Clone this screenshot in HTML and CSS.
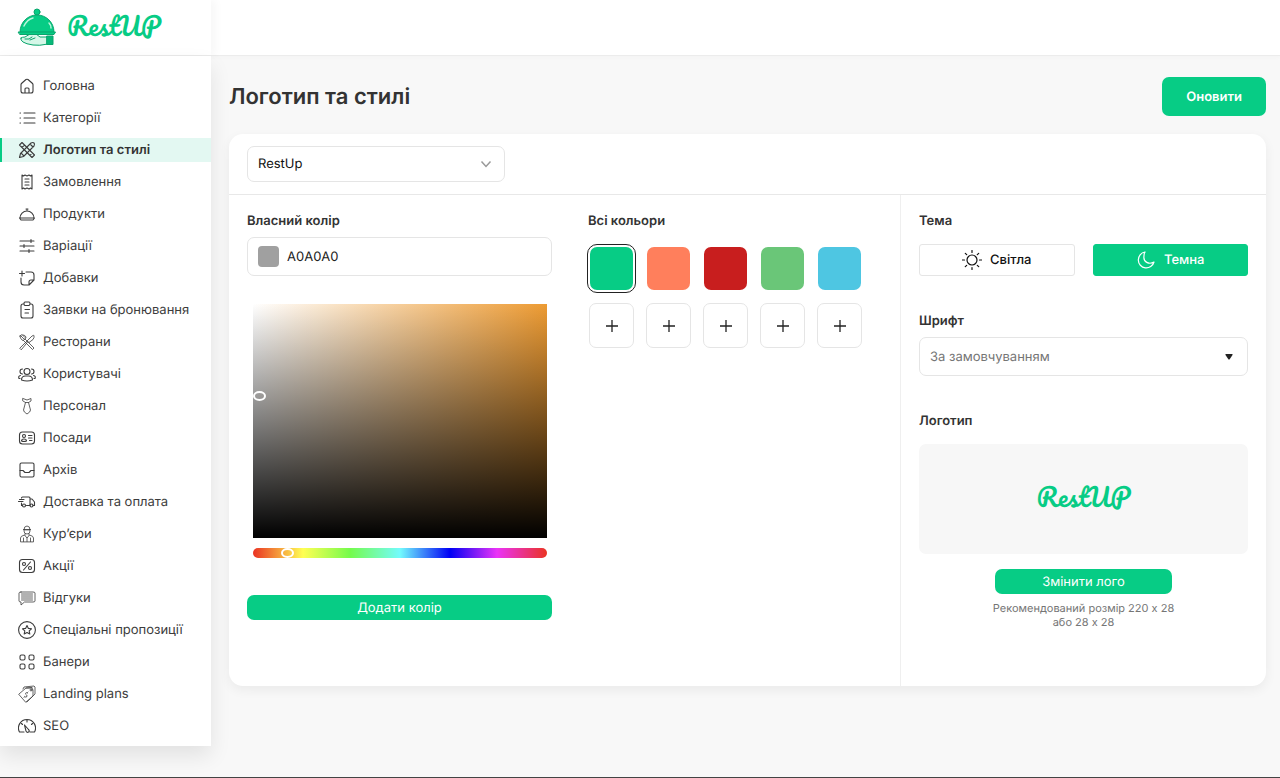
FILE: index.html
```html
<!DOCTYPE html>
<html lang="uk">

<head>
    <meta charset="UTF-8">
    <meta name="viewport" content="width=device-width, initial-scale=1">
    <title>Логотип та стилі</title>
    <link rel="stylesheet" href="styles.css">
</head>

<body>
    <header class="header">
        <a class="brand" href="#">
            <svg class="brand-icon" viewBox="0 0 40 40" fill="none" stroke="#0aa56c" stroke-linecap="round" stroke-linejoin="round">
                <path d="M4 30q1-1 4-1l5-3h6l4 3h8v7q-9 2-15 1-7-1-10-3-3-2-2-4z" fill="#d5f7e8" />
                <path d="M8 31h4l3-2M13 32l5-2" />
                <rect x="30" y="28" width="6" height="8.500" fill="#07b879" />
                <circle cx="20" cy="4" r="3" fill="#07cc85" />
                <path d="M3 24C3 14 11 7 20 7s17 7 17 17z" fill="#07cc85" />
                <path d="M1.500 24h37l-1.500 2.500H3z" fill="#07cc85" />
                <path d="M7 18c2-4 5-7 9-8M32 15q2 2 2 5" stroke="#baf5da" stroke-width="1.500" />
            </svg>
            <span class="wordmark">RestUP</span>
        </a>
    </header>

    <div class="layout">
        <nav class="sidebar">
            <ul class="menu">
                <li><a href="#">
                    <svg viewBox="0 0 18 18"><path d="M3 7.500Q3 7 4 6l4-3.500q1-.5 2 0L14 6q1 1 1 1.500V14q0 2-2 2H5q-2 0-2-2zM7 16v-4q0-1 1-1h2q1 0 1 1v4" /></svg>
                    Головна</a></li>
                <li><a href="#">
                    <svg viewBox="0 0 18 18"><path d="M6 4h11M6 9h11M6 14h11M2 4h.5M2 9h.5M2 14h.5" /></svg>
                    Категорії</a></li>
                <li><a class="active" href="#">
                    <svg viewBox="0 0 18 18"><path d="M1.500 4 4 1.500l12.500 12.500-2.500 2.500zM4 6.500l1-1M6.500 4 5.500 5M12 14.500l1-1" /><path d="m1.500 16.500 1-4L13 2q2-1 3 0 1 1 0 3L5.500 15.500zM3 12l3 3M12 3l3 3" /></svg>
                    Логотип та стилі</a></li>
                <li><a href="#">
                    <svg viewBox="0 0 18 18"><path d="M4 2l1.500 1L7 2l2 1 2-1 1.500 1L14 2v14l-1.500-1-1.500 1-2-1-2 1-1.500-1L4 16zM7 6h4M7 9h4M7 12h4" /></svg>
                    Замовлення</a></li>
                <li><a href="#">
                    <svg viewBox="0 0 18 18"><path d="M2 13a7 7 0 0 1 14 0M1.500 13h15l-1.500 2H3zM9 6V4M8 4h2" /></svg>
                    Продукти</a></li>
                <li><a href="#">
                    <svg viewBox="0 0 18 18"><path d="M2 4h14M2 9h14M2 14h14M13 2.500v3M6 7.500v3M11 12.500v3" /></svg>
                    Варіації</a></li>
                <li><a href="#">
                    <svg viewBox="0 0 18 18"><path d="M8 3h5q3 0 3 3v5l-5 5H6q-3 0-3-3V9M16 11h-3q-2 0-2 2v3M4 2v5M1.500 4.500h5" /></svg>
                    Добавки</a></li>
                <li><a href="#">
                    <svg viewBox="0 0 18 18"><path d="M6 3H5Q3 3 3 5v10q0 2 2 2h8q2 0 2-2V5q0-2-2-2h-1M6 2.500Q6 1 7 1h4q1 0 1 1.500T11 4.500H7Q6 4.500 6 2.500zM7 8.500h4.500M7 12h3.500" /></svg>
                    Заявки на бронювання</a></li>
                <li><a href="#">
                    <svg class="thin" viewBox="0 0 18 18"><path d="M2 3q1-2 3-1 2 0 3 2 0 1-1 2L6 7Q5 8 4 7 2 5 2 3zM3 3l3 3M5 2.500 7 4.500M7 6l9 9-1.500 1.500-9-9" /><path d="M2 15 14 3q2-1 2-.5.5 2-1 4l-4 3-1-1-6.500 8z" /></svg>
                    Ресторани</a></li>
                <li><a href="#">
                    <svg viewBox="0 0 18 18"><circle cx="9" cy="6.500" r="3" /><path d="M3.500 15q0-4 4-4h3q4 0 4 4-5.500 2-11 0zM4.500 9a2.500 2.500 0 0 1 0-5M13.500 9a2.500 2.500 0 0 0 0-5M2 13.500H1Q0 11 2.500 10.500M16 13.500h1q1-2.500-1.500-3" /></svg>
                    Користувачі</a></li>
                <li><a href="#">
                    <svg class="thin" viewBox="0 0 18 18"><path d="M5 1.500 9 3l4-1.500V4l-2.500 1.500h-3L5 4zM7.500 5.500 5.500 13q0 2 3.500 4 3.500-2 3.500-4l-2-7.500" /></svg>
                    Персонал</a></li>
                <li><a href="#">
                    <svg viewBox="0 0 18 18"><rect x="1.500" y="3" width="15" height="12" rx="3" /><circle cx="6" cy="7" r="1.500" /><path d="M3.500 12q0-2 2.500-2t2.500 2q-2.500 1-5 0zM10.500 6.500H14M10.500 9H14M11.500 11.500H14" /></svg>
                    Посади</a></li>
                <li><a href="#">
                    <svg viewBox="0 0 18 18"><rect x="2" y="2" width="14" height="14" rx="1.500" /><path d="M2 9.500h3l2 2h4l2-2h3" /></svg>
                    Архів</a></li>
                <li><a href="#">
                    <svg viewBox="0 0 18 18"><path d="M3.500 5q0-1 1-1H11q1 0 1 1v7.500H8.500M3.500 10v2.500h.5M12 6h2l2.500 3v3.500H15M1.500 6.500H6M.5 8.500H5" /><circle cx="6" cy="12.500" r="1.500" /><circle cx="13.500" cy="12.500" r="1.500" /></svg>
                    Доставка та оплата</a></li>
                <li><a href="#">
                    <svg class="thin" viewBox="0 0 18 18"><path d="M6 4.500Q6 1 9 1t3 3.500zM6 4.500V6q0 3 3 3t3-3V4.500M5.500 4.500h7M2.500 16.500V13q0-2 4-3l2.500 3 2.500-3q4 1 4 3v3.500zM5.500 13v3.500M12.500 13v3.500M9 13v3.500M7 9v1M11 9v1" /></svg>
                    Кур’єри</a></li>
                <li><a href="#">
                    <svg viewBox="0 0 18 18"><rect x="1.500" y="2.500" width="15" height="13" rx="3" /><circle cx="6" cy="7" r="1.500" /><circle cx="12" cy="11" r="1.500" /><path d="m5.500 13 7-8" /></svg>
                    Акції</a></li>
                <li><a href="#">
                    <svg class="thin" viewBox="0 0 18 18"><path d="M3 3h12q2 0 2 1v8q0 1-2 1H6.500L3 16v-3q-2 0-2-1V4q0-1 2-1zM3.500 5h11M3.500 7h11M3.500 9h11M3.500 11h11" /></svg>
                    Відгуки</a></li>
                <li><a href="#">
                    <svg viewBox="0 0 18 18"><circle cx="9" cy="9" r="8.400" /><path d="m9 4.500 1.400 2.900 3.100.4-2.300 2.100.6 3.100L9 11.500 6.200 13l.6-3.100-2.300-2.100 3.100-.4z" /></svg>
                    Спеціальні пропозиції</a></li>
                <li><a href="#">
                    <svg viewBox="0 0 18 18"><rect x="2" y="2" width="5" height="5" rx="1.500" /><rect x="11" y="2" width="5" height="5" rx="1.500" /><rect x="2" y="11" width="5" height="5" rx="1.500" /><rect x="11" y="11" width="5" height="5" rx="1.500" /></svg>
                    Банери</a></li>
                <li><a href="#">
                    <svg class="thin" viewBox="0 0 18 18"><path d="m1 9 7-6h6l1 2v6l-7 6zM5 4l1-2 10-1 1 1v7l-8 8M8.500 3 14 2.500" /><circle cx="13" cy="5" r="1" /><path d="M9.500 8q-2-1-2 .5 0 1 1 1.500t0 2q-1 .5-2-.5M9.500 7.500l.5-.5M6.500 12l-.5.5" /></svg>
                    Landing plans</a></li>
                <li><a href="#">
                    <svg viewBox="0 0 18 18"><path d="M6 15H1.500A8.500 8.500 0 1 1 16.500 15H12M9 3v2M3.500 6.500l1 1M14.500 6.500l-1 1M6.500 8 8 14q1 2 2.500 1t0-2.500z" /></svg>
                    SEO</a></li>
            </ul>
        </nav>

        <main class="content">
            <div class="page-head">
                <h1>Логотип та стилі</h1>
                <button class="btn btn-update" type="button">Оновити</button>
            </div>

            <section class="card">
                <div class="card-top">
                    <div class="select-wrap place-select">
                        <select aria-label="Ресторан">
                            <option>RestUp</option>
                        </select>
                        <svg class="chevron" viewBox="0 0 12 12"><path d="m1.500 3.500 4.500 5 4.500-5" /></svg>
                    </div>
                </div>

                <div class="card-body">
                    <div class="colors">
                        <div class="custom-color">
                            <label class="label" for="hex">Власний колір</label>
                            <div class="hex-field">
                                <span class="hex-preview"></span>
                                <input type="text" id="hex" value="A0A0A0">
                            </div>
                            <div class="picker">
                                <div class="saturation">
                                    <button class="saturation-pin" type="button" aria-label="Насиченість"></button>
                                </div>
                                <input class="hue" type="range" min="0" max="360" value="36" aria-label="Відтінок">
                            </div>
                            <button class="btn btn-small" type="button">Додати колір</button>
                        </div>

                        <div class="all-colors">
                            <h2 class="label">Всі кольори</h2>
                            <div class="swatches">
                                <button class="swatch green selected" type="button" aria-label="Зелений"></button>
                                <button class="swatch coral" type="button" aria-label="Кораловий"></button>
                                <button class="swatch red" type="button" aria-label="Червоний"></button>
                                <button class="swatch lime" type="button" aria-label="Салатовий"></button>
                                <button class="swatch blue" type="button" aria-label="Блакитний"></button>
                                <button class="add" type="button" aria-label="Додати"><svg viewBox="0 0 14 14"><path d="M7 1v12M1 7h12" /></svg></button>
                                <button class="add" type="button" aria-label="Додати"><svg viewBox="0 0 14 14"><path d="M7 1v12M1 7h12" /></svg></button>
                                <button class="add" type="button" aria-label="Додати"><svg viewBox="0 0 14 14"><path d="M7 1v12M1 7h12" /></svg></button>
                                <button class="add" type="button" aria-label="Додати"><svg viewBox="0 0 14 14"><path d="M7 1v12M1 7h12" /></svg></button>
                                <button class="add" type="button" aria-label="Додати"><svg viewBox="0 0 14 14"><path d="M7 1v12M1 7h12" /></svg></button>
                            </div>
                        </div>
                    </div>

                    <div class="settings">
                        <div class="setting">
                            <h2 class="label">Тема</h2>
                            <div class="themes">
                                <button class="theme" type="button">
                                    <svg viewBox="0 0 20 20"><circle cx="10" cy="10" r="5" /><path d="M10 .5v2M10 17.500v2M.5 10h2M17.500 10h2M3.300 3.300l1.400 1.400M15.300 15.300l1.400 1.400M3.300 16.700l1.400-1.400M15.300 4.700l1.400-1.400" /></svg>
                                    Світла
                                </button>
                                <button class="theme dark" type="button">
                                    <svg viewBox="0 0 20 20"><path d="M9 2a8 8 0 1 0 9 10c-5 3-11 0-10-6 0-2 0-3 1-4z" /></svg>
                                    Темна
                                </button>
                            </div>
                        </div>

                        <div class="setting">
                            <label class="label" for="font">Шрифт</label>
                            <div class="select-wrap font-select">
                                <select id="font">
                                    <option>За замовчуванням</option>
                                </select>
                                <svg class="caret" viewBox="0 0 8 6"><path d="M1 0h6q1 0 .5 1L4.500 5.500h-1L.5 1Q0 0 1 0z" /></svg>
                            </div>
                        </div>

                        <div class="setting">
                            <h2 class="label">Логотип</h2>
                            <div class="logo-preview">
                                <span class="wordmark">RestUP</span>
                            </div>
                            <div class="logo-actions">
                                <button class="btn btn-small" type="button">Змінити лого</button>
                                <p>Рекомендований розмір 220 х 28<br>або 28 х 28</p>
                            </div>
                        </div>
                    </div>
                </div>
            </section>
        </main>
    </div>
</body>

</html>
```

FILE: styles.css
```css
* {
    box-sizing: border-box;
}

body {
    margin: 0;
    min-height: 100vh;
    font-family: Inter, "Liberation Sans", sans-serif;
    font-size: 13px;
    color: #333;
    background: #f8f8f8;
    border-bottom: 1px solid #444;
    text-rendering: geometricPrecision;
}

button,
input,
select {
    font-family: inherit;
    font-size: 13px;
    text-rendering: inherit;
}

button {
    cursor: pointer;
}

svg {
    flex-shrink: 0;
}

.header {
    height: 56px;
    background: white;
    border-bottom: 1px solid #ececec;
    box-shadow: 0 2px 4px rgba(0, 0, 0, 0.02);
}

.brand {
    display: flex;
    align-items: center;
    gap: 10px;
    width: 211px;
    height: 55px;
    padding-left: 17px;
    text-decoration: none;
    box-shadow: 5px 0 8px rgba(0, 0, 0, 0.03);
}

.brand-icon {
    width: 40px;
    height: 40px;
}

.wordmark {
    padding-bottom: 4px;
    font-family: Pacifico, "Liberation Serif", cursive;
    font-size: 25px;
    line-height: 40px;
    color: #07cc85;
}

.layout {
    display: flex;
    align-items: flex-start;
}

/* sidebar */

.sidebar {
    flex: 0 0 211px;
    padding: 18px 0 8px;
    background: white;
    box-shadow: 0 10px 20px rgba(0, 0, 0, 0.09);
}

.menu {
    display: flex;
    flex-direction: column;
    gap: 8px;
    margin: 0;
    padding: 0;
    list-style: none;
}

.menu a {
    display: flex;
    align-items: center;
    gap: 7px;
    height: 24px;
    padding-left: 16px;
    border-left: 2px solid transparent;
    color: #3c3c3c;
    text-decoration: none;
}

.menu a.active {
    font-weight: 600;
    color: #333;
    background: #e3f8f2;
    border-left-color: #07cc85;
}

.menu svg {
    width: 18px;
    height: 18px;
    fill: none;
    stroke: #3c3c3c;
    stroke-width: 1.1;
    stroke-linecap: round;
    stroke-linejoin: round;
}

.menu svg.thin {
    stroke-width: 0.8;
}

/* page */

.content {
    flex: 1;
    min-width: 0;
    padding: 21px 14px 32px 18px;
}

.page-head {
    display: flex;
    align-items: center;
    justify-content: space-between;
    margin-bottom: 18px;
}

h1 {
    margin: 0;
    font-size: 22px;
    font-weight: 600;
}

.btn {
    border: none;
    border-radius: 7px;
    color: white;
    background: #07cc85;
}

.btn-update {
    height: 39px;
    padding: 0 24px;
    font-weight: 600;
}

.btn-small {
    height: 25px;
    padding: 0 16px;
}

.card {
    background: white;
    border-radius: 14px;
    box-shadow: 0 4px 12px rgba(0, 0, 0, 0.06);
}

.card-top {
    padding: 12px 18px;
    border-bottom: 1px solid #e8e8e8;
}

.card-body {
    display: flex;
}

.label {
    display: block;
    margin: 0;
    font-size: 13px;
    font-weight: 600;
    line-height: 16px;
}

.select-wrap {
    position: relative;
}

.select-wrap select {
    width: 100%;
    padding: 0 10px;
    border: 1px solid #e5e5e5;
    border-radius: 7px;
    background: white;
    appearance: none;
}

.select-wrap svg {
    position: absolute;
    pointer-events: none;
}

.place-select {
    width: 258px;
}

.place-select select {
    height: 36px;
    color: #111;
}

.chevron {
    top: 12px;
    right: 13px;
    width: 12px;
    height: 12px;
    fill: none;
    stroke: #999;
    stroke-width: 1.5;
}

/* colors */

.colors {
    flex: 1;
    display: flex;
    gap: 36px;
    padding: 18px 18px 66px;
}

.custom-color {
    flex: 1;
    display: flex;
    flex-direction: column;
}

.hex-field {
    display: flex;
    align-items: center;
    gap: 8px;
    height: 39px;
    margin-top: 8px;
    padding: 0 10px;
    border: 1px solid #e5e5e5;
    border-radius: 7px;
}

.hex-preview {
    width: 21px;
    height: 21px;
    border-radius: 4px;
    background: #a0a0a0;
}

.hex-field input {
    flex: 1;
    min-width: 0;
    padding: 0;
    border: none;
    outline: none;
    color: #222;
}

.picker {
    display: flex;
    flex-direction: column;
    gap: 10px;
    margin: 28px 5px 37px 6px;
}

.saturation {
    position: relative;
    height: 234px;
    background: linear-gradient(to top, #000, transparent), linear-gradient(to right, #fff, #ed9b33);
}

.saturation-pin {
    position: absolute;
    top: 37%;
    left: 0;
    width: 13px;
    height: 10px;
    padding: 0;
    border: 2px solid white;
    border-radius: 50%;
    background: transparent;
}

.hue {
    width: 100%;
    height: 10px;
    margin: 0;
    border-radius: 5px;
    background: linear-gradient(to right, #ea3323, #ffff54 17%, #75fb4c 33%, #73fbfd 50%, #0000f5 67%, #ea33f7 83%, #ea3323);
    appearance: none;
}

.hue::-webkit-slider-thumb {
    width: 13px;
    height: 10px;
    border: 2px solid white;
    border-radius: 50%;
    background: transparent;
    appearance: none;
}

.all-colors {
    flex: 0 0 294px;
}

.swatches {
    display: grid;
    grid-template-columns: repeat(5, 45px);
    grid-auto-rows: 45px;
    gap: 12px;
    margin: 17px 0 0 1px;
}

.swatch {
    margin: 1px;
    padding: 0;
    border: none;
    border-radius: 7px;
}

.swatch.selected {
    outline: 1px solid #222;
    outline-offset: 2px;
}

.green {
    background: #07cc85;
}

.coral {
    background: #ff7f5c;
}

.red {
    background: #c81e1e;
}

.lime {
    background: #6ac678;
}

.blue {
    background: #4ec6e2;
}

.add {
    display: flex;
    align-items: center;
    justify-content: center;
    padding: 0;
    border: 1px solid #e5e5e5;
    border-radius: 7px;
    background: white;
}

.add svg {
    width: 14px;
    height: 14px;
    fill: none;
    stroke: #222;
    stroke-width: 1.3;
}

/* theme, font and logo */

.settings {
    flex: 0 0 366px;
    display: flex;
    flex-direction: column;
    gap: 37px;
    padding: 18px;
    border-left: 1px solid #efefef;
}

.themes {
    display: flex;
    gap: 18px;
    margin-top: 15px;
}

.theme {
    flex: 1;
    display: flex;
    align-items: center;
    justify-content: center;
    gap: 8px;
    height: 32px;
    border: 1px solid #e5e5e5;
    border-radius: 3px;
    font-weight: 500;
    color: #111;
    background: white;
}

.theme.dark {
    border-color: #07cc85;
    color: white;
    background: #07cc85;
}

.theme svg {
    width: 20px;
    height: 20px;
    fill: none;
    stroke: currentColor;
    stroke-width: 1.2;
    stroke-linecap: round;
    stroke-linejoin: round;
}

.font-select {
    margin-top: 8px;
}

.font-select select {
    height: 39px;
    color: #757575;
}

.caret {
    top: 17px;
    right: 15px;
    width: 8px;
    height: 6px;
    fill: #222;
}

.logo-preview {
    display: flex;
    align-items: center;
    justify-content: center;
    height: 110px;
    margin-top: 15px;
    border-radius: 7px;
    background: #f7f7f7;
}

.logo-actions {
    display: flex;
    flex-direction: column;
    align-items: center;
    gap: 7px;
    margin-top: 15px;
}

.logo-actions .btn {
    width: 177px;
}

.logo-actions p {
    margin: 0;
    font-size: 11px;
    line-height: 14px;
    text-align: center;
    color: #757575;
}
```
